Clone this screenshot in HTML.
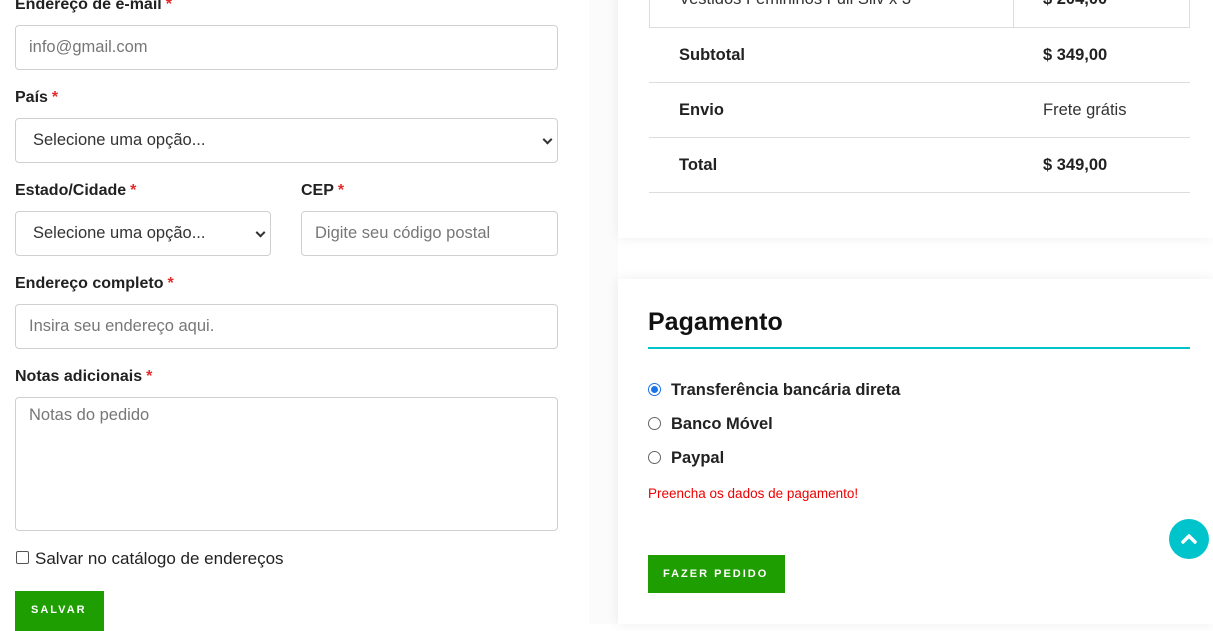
<!DOCTYPE html>
<html><head><meta charset="utf-8"><style>
*{box-sizing:border-box;margin:0;padding:0}
body{width:1213px;height:624px;overflow:hidden;background:#fff;font-family:"Liberation Sans",sans-serif;color:#222;position:relative}
.a{position:absolute}
.lbl{position:absolute;left:15px;font-size:16px;font-weight:bold;color:#212121}
.lbl i{color:#e02b2b;font-style:normal;margin-left:4px}
.in{position:absolute;border:1px solid #d0d0d0;border-radius:4px;background:#fff;font-size:16.5px;color:#777;padding-left:13px;display:flex;align-items:center}
.sel{color:#333;padding-left:17px}
.sel:after{content:"";position:absolute;right:6px;top:50%;width:5px;height:5px;border-right:2px solid #333;border-bottom:2px solid #333;transform:translateY(-70%) rotate(45deg)}
.card{position:absolute;left:618px;right:0;background:#fff;box-shadow:0 0 12px rgba(0,0,0,.07)}
.row{position:absolute;left:649px;width:541px;border-bottom:1px solid #ddd;height:55px;font-size:16.5px}
.row b,.row span{position:absolute;top:18px}
.row b{left:30px}.row .v{left:394px}
.rad{position:absolute;left:648px;font-size:16.5px;font-weight:bold;color:#222}
.rad .c{position:absolute;left:0;top:2px;width:13px;height:13px;border:1px solid #666;border-radius:50%}
.rad .t{position:absolute;left:23px;white-space:nowrap}
</style></head><body>
<div class="a" style="left:589px;top:0;width:29px;height:624px;background:#fbfbfb"></div>
<div class="lbl" style="top:-4px">Endereço de e-mail<i>*</i></div>
<div class="in" style="left:15px;top:25px;width:543px;height:45px">info@gmail.com</div>
<div class="lbl" style="top:89px">País<i>*</i></div>
<div class="in sel" style="left:15px;top:118px;width:543px;height:45px">Selecione uma opção...</div>
<div class="lbl" style="top:182px">Estado/Cidade<i>*</i></div>
<div class="lbl" style="top:182px;left:301px">CEP<i>*</i></div>
<div class="in sel" style="left:15px;top:211px;width:256px;height:45px">Selecione uma opção...</div>
<div class="in" style="left:301px;top:211px;width:257px;height:45px">Digite seu código postal</div>
<div class="lbl" style="top:275px">Endereço completo<i>*</i></div>
<div class="in" style="left:15px;top:304px;width:543px;height:45px">Insira seu endereço aqui.</div>
<div class="lbl" style="top:368px">Notas adicionais<i>*</i></div>
<div class="in" style="left:15px;top:397px;width:543px;height:134px;align-items:flex-start;padding-top:8px">Notas do pedido</div>
<div class="a" style="left:16px;top:551px;width:13px;height:13px;border:1px solid #555;border-radius:2px"></div>
<div class="a" style="left:35px;top:549px;font-size:17px;color:#222">Salvar no catálogo de endereços</div>
<div class="a" style="left:15px;top:591px;width:89px;height:40px;background:#1e9e00;color:#fff;font-size:11px;font-weight:bold;letter-spacing:2px;padding:13px 0 0 16px">SALVAR</div>

<div class="card" style="top:-10px;height:248px"></div>
<div class="a" style="left:649px;top:-5px;width:541px;height:33px;border:1px solid #ddd;border-top:none"></div>
<div class="a" style="left:1013px;top:-5px;width:1px;height:33px;background:#ddd"></div>
<div class="a" style="left:679px;top:-10px;font-size:16.5px;color:#333">Vestidos Femininos Full Sliv x 3</div>
<div class="a" style="left:1043px;top:-10px;font-size:16.5px;font-weight:bold">$ 204,00</div>
<div class="row" style="top:28px"><b>Subtotal</b><b class="v" style="left:394px">$ 349,00</b></div>
<div class="row" style="top:83px"><b>Envio</b><span class="v" style="color:#333">Frete grátis</span></div>
<div class="row" style="top:138px"><b>Total</b><b class="v" style="left:394px">$ 349,00</b></div>

<div class="card" style="top:279px;height:345px"></div>
<div class="a" style="left:648px;top:308px;font-size:25px;font-weight:bold;color:#111">Pagamento</div>
<div class="a" style="left:648px;top:347px;width:542px;height:2px;background:#00c4cc"></div>
<div class="rad" style="top:381px"><div class="c" style="border-color:#1a73e8"><div style="margin:2px;width:7px;height:7px;border-radius:50%;background:#1a73e8"></div></div><span class="t">Transferência bancária direta</span></div>
<div class="rad" style="top:415px"><div class="c"></div><span class="t">Banco Móvel</span></div>
<div class="rad" style="top:449px"><div class="c"></div><span class="t">Paypal</span></div>
<div class="a" style="left:648px;top:486px;font-size:13.5px;color:#e00">Preencha os dados de pagamento!</div>
<div class="a" style="left:648px;top:555px;width:137px;height:38px;background:#1e9e00;color:#fff;font-size:11px;font-weight:bold;letter-spacing:2px;padding:13px 0 0 15px;white-space:nowrap">FAZER PEDIDO</div>
<div class="a" style="left:1169px;top:519px;width:40px;height:40px;border-radius:50%;background:#00c4cc">
<svg width="40" height="40" viewBox="0 0 40 40"><path d="M14 23 L20 17 L26 23" stroke="#fff" stroke-width="3.5" fill="none" stroke-linecap="round" stroke-linejoin="round"/></svg></div>
</body></html>
